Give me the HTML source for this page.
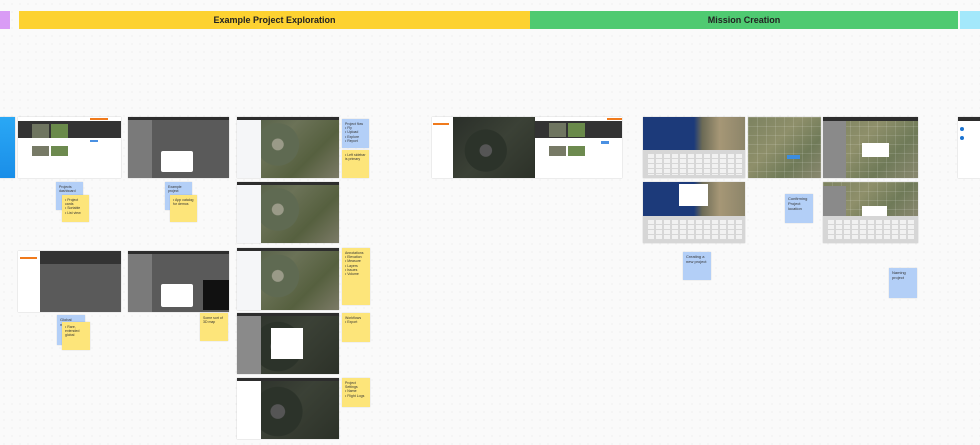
<!DOCTYPE html>
<html><head><meta charset="utf-8"><style>
*{margin:0;padding:0;box-sizing:border-box}
body{width:980px;height:445px;overflow:hidden;position:relative;font-family:"Liberation Sans",sans-serif;background:#fafafa;background-image:radial-gradient(#e6e6e6 0.6px,transparent 0.7px);background-size:8px 8px}
.a{position:absolute}
.bar{position:absolute;top:11px;height:18px;font-size:9px;font-weight:bold;color:#222;display:flex;align-items:center;justify-content:center}
.s{position:absolute;box-shadow:0 0 1px rgba(0,0,0,.3)}
.by{background:#fde57a}.bb{background:#b3cff7}
.st{position:absolute;font-size:3.5px;color:#333;padding:3px;line-height:1.2;box-shadow:0 0 1px rgba(0,0,0,.2)}
.map{background:radial-gradient(circle at 40% 45%,#9a9a88 0 8%,#5f6a52 9% 30%,transparent 31%),linear-gradient(135deg,#4e5a44,#6b7257 40%,#56603f 70%,#7b7a66)}
.dmap{background:radial-gradient(circle at 40% 55%,#555 0 10%,#2c332a 11% 35%,transparent 36%),linear-gradient(135deg,#2a2f29,#3b4136 50%,#2c3128)}
.aer{background:linear-gradient(90deg,rgba(255,255,255,.12) 1px,transparent 1px) 0 0/9px 9px,linear-gradient(rgba(255,255,255,.12) 1px,transparent 1px) 0 0/9px 9px,linear-gradient(135deg,#7c8260,#8e8f6a 40%,#6f7a58 70%,#8a8870)}
.ca{background:linear-gradient(90deg,#1c3a7a 0 50%,#6b6a55 58%,#a69776 75%,#8d856a)}
.kb{background:linear-gradient(#d6d6d6 1px,transparent 1px) 0 0/8px 5px,linear-gradient(90deg,#d6d6d6 2px,transparent 2px) 0 0/8px 5px,#f1f1f1;border:3px solid #d6d6d6}
</style></head><body>
<div class="bar" style="left:0;width:10px;background:#d99cf5"></div>
<div class="bar" style="left:19px;width:511px;background:#fdd231">Example Project Exploration</div>
<div class="bar" style="left:530px;width:428px;background:#4fca71">Mission Creation</div>
<div class="bar" style="left:960px;width:20px;background:#a3e8fb"></div>

<div class="s" style="left:0;top:117px;width:15px;height:61px;background:linear-gradient(#2aa8f5,#1a8ee8)"></div>
<div class="s" style="left:18px;top:117px;width:103px;height:61px;background:#fff">
 <div class="a" style="left:0;top:4px;width:103px;height:17px;background:#333"></div>
 <div class="a" style="left:14px;top:7px;width:17px;height:14px;background:#6f7560"></div>
 <div class="a" style="left:33px;top:7px;width:17px;height:14px;background:#6a8a4a"></div>
 <div class="a" style="left:14px;top:29px;width:17px;height:10px;background:#777a66"></div>
 <div class="a" style="left:33px;top:29px;width:17px;height:10px;background:#6d8a4f"></div>
 <div class="a" style="left:72px;top:1px;width:18px;height:2px;background:#f07a1c"></div>
 <div class="a" style="left:72px;top:23px;width:8px;height:2px;background:#4a90e2"></div>
</div>
<div class="s" style="left:128px;top:117px;width:101px;height:61px;background:#5a5a5a">
 <div class="a" style="left:0;top:0;width:101px;height:3px;background:#2d2d2d"></div>
 <div class="a" style="left:0;top:3px;width:24px;height:58px;background:#7a7a7a"></div>
 <div class="a" style="left:33px;top:34px;width:32px;height:21px;background:#fff;border-radius:2px"></div>
</div>
<div class="s map" style="left:237px;top:117px;width:102px;height:61px">
 <div class="a" style="left:0;top:0;width:102px;height:3px;background:#2d2d2d"></div>
 <div class="a" style="left:0;top:3px;width:24px;height:58px;background:#f5f6f8"></div>
</div>
<div class="st bb" style="left:342px;top:119px;width:27px;height:29px">Project flow<br>• Fly<br>• Upload<br>• Explore<br>• Report</div>
<div class="st by" style="left:342px;top:150px;width:27px;height:28px">• Left sidebar is primary</div>

<div class="s" style="left:432px;top:117px;width:103px;height:61px;background:#fff">
 <div class="a dmap" style="left:21px;top:0;width:82px;height:61px"></div>
 <div class="a" style="left:1px;top:6px;width:16px;height:2px;background:#f07a1c"></div>
</div>
<div class="s" style="left:535px;top:117px;width:87px;height:61px;background:#fff">
 <div class="a" style="left:0;top:4px;width:87px;height:17px;background:#333"></div>
 <div class="a" style="left:14px;top:6px;width:17px;height:14px;background:#6f7560"></div>
 <div class="a" style="left:33px;top:6px;width:17px;height:14px;background:#6a8a4a"></div>
 <div class="a" style="left:14px;top:29px;width:17px;height:10px;background:#777a66"></div>
 <div class="a" style="left:33px;top:29px;width:17px;height:10px;background:#6d8a4f"></div>
 <div class="a" style="left:72px;top:1px;width:15px;height:2px;background:#f07a1c"></div>
 <div class="a" style="left:66px;top:24px;width:8px;height:3px;background:#4a90e2"></div>
</div>
<div class="s" style="left:643px;top:117px;width:102px;height:61px">
 <div class="a ca" style="left:0;top:0;width:102px;height:33px"></div>
 <div class="a kb" style="left:0;top:33px;width:102px;height:28px"></div>
</div>
<div class="s aer" style="left:748px;top:117px;width:73px;height:61px">
 <div class="a" style="left:39px;top:38px;width:13px;height:4px;background:#3b8de0"></div>
</div>
<div class="s aer" style="left:823px;top:117px;width:95px;height:61px">
 <div class="a" style="left:0;top:0;width:95px;height:4px;background:#2d2d2d"></div>
 <div class="a" style="left:0;top:4px;width:23px;height:57px;background:#8a8a8a"></div>
 <div class="a" style="left:39px;top:26px;width:27px;height:14px;background:#fff"></div>
</div>
<div class="s" style="left:958px;top:117px;width:22px;height:61px;background:#fff">
 <div class="a" style="left:0;top:0;width:22px;height:4px;background:#2d2d2d"></div>
 <div class="a" style="left:2px;top:10px;width:4px;height:4px;border-radius:50%;background:#1a73d0"></div>
 <div class="a" style="left:2px;top:19px;width:4px;height:4px;border-radius:50%;background:#1a73d0"></div>
</div>

<div class="s map" style="left:237px;top:182px;width:102px;height:61px">
 <div class="a" style="left:0;top:0;width:102px;height:3px;background:#2d2d2d"></div>
 <div class="a" style="left:0;top:3px;width:24px;height:58px;background:#f5f6f8"></div>
</div>
<div class="s" style="left:643px;top:182px;width:102px;height:61px">
 <div class="a ca" style="left:0;top:0;width:102px;height:34px"></div>
 <div class="a" style="left:36px;top:2px;width:29px;height:22px;background:#fff"></div>
 <div class="a kb" style="left:0;top:34px;width:102px;height:27px"></div>
</div>
<div class="s" style="left:823px;top:182px;width:95px;height:61px">
 <div class="a aer" style="left:0;top:0;width:95px;height:34px"></div>
 <div class="a" style="left:0;top:4px;width:23px;height:30px;background:#8a8a8a"></div>
 <div class="a" style="left:39px;top:24px;width:25px;height:10px;background:#fff"></div>
 <div class="a kb" style="left:0;top:34px;width:95px;height:27px"></div>
</div>

<div class="st bb" style="left:56px;top:182px;width:27px;height:28px">Projects dashboard</div>
<div class="st by" style="left:62px;top:195px;width:27px;height:27px">• Project cards<br>• Sortable<br>• List view</div>
<div class="st bb" style="left:165px;top:182px;width:27px;height:28px">Example project</div>
<div class="st by" style="left:170px;top:195px;width:27px;height:27px">• App catalog for demos</div>
<div class="st bb" style="left:683px;top:252px;width:28px;height:28px;font-size:4px">Creating a new project</div>
<div class="st bb" style="left:785px;top:194px;width:28px;height:29px;font-size:4px">Confirming Project location</div>
<div class="st bb" style="left:889px;top:268px;width:28px;height:30px;font-size:4px">Naming project</div>

<div class="s" style="left:18px;top:251px;width:103px;height:61px;background:#5a5a5a">
 <div class="a" style="left:0;top:0;width:22px;height:61px;background:#fff"></div>
 <div class="a" style="left:22px;top:0;width:81px;height:13px;background:#333"></div>
 <div class="a" style="left:2px;top:6px;width:17px;height:2px;background:#f07a1c"></div>
</div>
<div class="s" style="left:128px;top:251px;width:101px;height:61px;background:#5a5a5a">
 <div class="a" style="left:0;top:0;width:101px;height:3px;background:#2d2d2d"></div>
 <div class="a" style="left:0;top:3px;width:24px;height:58px;background:#7a7a7a"></div>
 <div class="a" style="left:33px;top:33px;width:32px;height:23px;background:#fff;border-radius:2px"></div>
 <div class="a" style="left:75px;top:29px;width:26px;height:30px;background:#111"></div>
</div>
<div class="st bb" style="left:57px;top:315px;width:28px;height:30px;font-size:4px">Global navigation</div>
<div class="st by" style="left:62px;top:322px;width:28px;height:28px">• Rare, extended global</div>
<div class="st by" style="left:200px;top:313px;width:28px;height:28px">Some sort of 3D map</div>

<div class="s map" style="left:237px;top:248px;width:102px;height:62px">
 <div class="a" style="left:0;top:0;width:102px;height:3px;background:#2d2d2d"></div>
 <div class="a" style="left:0;top:3px;width:24px;height:59px;background:#f5f6f8"></div>
</div>
<div class="st by" style="left:342px;top:248px;width:28px;height:57px">Annotations<br>• Elevation<br>• Measure<br>• Layers<br>• Issues<br>• Volume</div>
<div class="s dmap" style="left:237px;top:313px;width:102px;height:61px">
 <div class="a" style="left:0;top:0;width:102px;height:3px;background:#2d2d2d"></div>
 <div class="a" style="left:0;top:3px;width:24px;height:58px;background:#8a8a8a"></div>
 <div class="a" style="left:34px;top:15px;width:32px;height:31px;background:#fff"></div>
</div>
<div class="st by" style="left:342px;top:313px;width:28px;height:29px">Workflows<br>• Export</div>
<div class="s dmap" style="left:237px;top:378px;width:102px;height:61px">
 <div class="a" style="left:0;top:0;width:102px;height:3px;background:#2d2d2d"></div>
 <div class="a" style="left:0;top:3px;width:24px;height:58px;background:#fff"></div>
</div>
<div class="st by" style="left:342px;top:378px;width:28px;height:29px">Project Settings<br>• Name<br>• Flight Logs</div>
</body></html>
